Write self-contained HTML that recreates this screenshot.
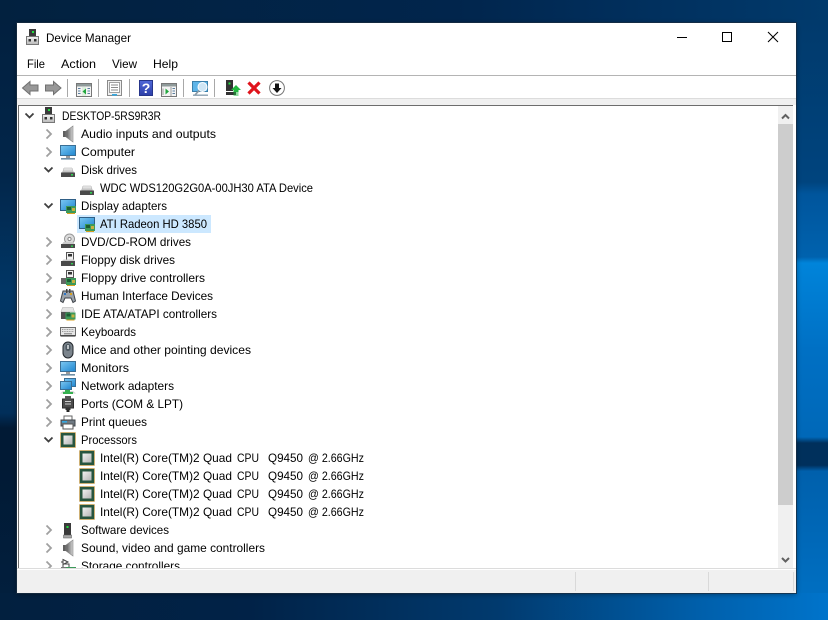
<!DOCTYPE html>
<html><head><meta charset="utf-8"><title>Device Manager</title>
<style>
html,body{margin:0;padding:0;width:828px;height:620px;overflow:hidden;background:#02203f}
svg{display:block}
text{font-family:"Liberation Sans",sans-serif;font-size:12px;fill:#000}
</style></head><body>
<svg xmlns="http://www.w3.org/2000/svg" width="828" height="620" viewBox="0 0 828 620">
<defs>
<linearGradient id="bg" x1="0" y1="0" x2="1" y2="0">
<stop offset="0" stop-color="#02203f"/><stop offset=".3" stop-color="#012247"/><stop offset=".6" stop-color="#013a6e"/><stop offset=".85" stop-color="#0060ac"/><stop offset="1" stop-color="#0074cb"/>
</linearGradient>
<linearGradient id="top" x1="0" y1="0" x2="1" y2="0">
<stop offset="0" stop-color="#02213f"/><stop offset=".55" stop-color="#01254c"/><stop offset=".7" stop-color="#012c58"/><stop offset="1" stop-color="#013a6c"/>
</linearGradient>
<linearGradient id="right" x1="0" y1="0" x2="0" y2="1">
<stop offset="0" stop-color="#013a6c"/><stop offset=".27" stop-color="#00447e"/><stop offset=".29" stop-color="#00559c"/><stop offset=".395" stop-color="#0062ae"/><stop offset=".405" stop-color="#0084da"/><stop offset=".55" stop-color="#0070c4"/><stop offset=".695" stop-color="#0068b8"/><stop offset=".705" stop-color="#00305c"/><stop offset=".742" stop-color="#00305c"/><stop offset=".752" stop-color="#0060ac"/><stop offset="1" stop-color="#0072c6"/>
</linearGradient>
<linearGradient id="left" x1="0" y1="0" x2="0" y2="1">
<stop offset="0" stop-color="#02203f"/><stop offset=".255" stop-color="#02264a"/><stop offset=".45" stop-color="#013665"/><stop offset=".655" stop-color="#012f5a"/><stop offset=".68" stop-color="#011a35"/><stop offset=".745" stop-color="#011a35"/><stop offset="1" stop-color="#02203f"/>
</linearGradient>
<linearGradient id="disk" x1="0" y1="0" x2="0" y2="1"><stop offset="0" stop-color="#f4f4f4"/><stop offset="1" stop-color="#b8b8b8"/></linearGradient>
<linearGradient id="scr" x1="0" y1="0" x2="1" y2="1"><stop offset="0" stop-color="#7cc8f2"/><stop offset="1" stop-color="#1f86d0"/></linearGradient>
<linearGradient id="chip" x1="0" y1="0" x2="1" y2="1"><stop offset="0" stop-color="#f2f2f2"/><stop offset="1" stop-color="#b5b5b5"/></linearGradient>
<linearGradient id="spk" x1="0" y1="0" x2="1" y2="0"><stop offset="0" stop-color="#5a5a5a"/><stop offset="1" stop-color="#d4d4d4"/></linearGradient>
<linearGradient id="help" x1="0" y1="0" x2="0" y2="1"><stop offset="0" stop-color="#5068d8"/><stop offset="1" stop-color="#2c3ea8"/></linearGradient>

<path id="cr" d="M-1.5 -4.5 L3 0 L-1.5 4.5" fill="none" stroke="#a0a0a0" stroke-width="1.8"/>
<path id="ex" d="M-3.5 -2.5 L.5 1.5 L4.5 -2.5" fill="none" stroke="#404040" stroke-width="1.8"/>

<g id="card"><rect x="0" y="0" width="10" height="7" fill="#3d9a5a"/><rect x="1" y="1" width="4" height="3" fill="#1d5c34"/><rect x="6" y="2" width="3" height="3" fill="#c8b040"/><path d="M1 7.5H9" stroke="#d8a020" stroke-width="1"/></g>

<g id="pc"><rect x="4" y="0" width="7" height="8" fill="#3a3a3a"/><rect x="7" y="2" width="2" height="2" fill="#20e040"/><rect x="1.5" y="7.5" width="12" height="8" fill="url(#disk)" stroke="#777"/><rect x="3.5" y="10" width="2.5" height="2.5" fill="#333"/><rect x="9" y="10" width="2.5" height="2.5" fill="#333"/></g>

<g id="audio"><rect x="2" y="5" width="3" height="6" fill="#5f5f5f"/><path d="M5 5 L12 0 V16 L5 11Z" fill="url(#spk)" stroke="#8a8a8a" stroke-width=".6"/></g>

<g id="mon"><rect x=".5" y=".5" width="15" height="10" fill="url(#scr)" stroke="#3a6f96"/><rect x="6" y="11" width="4" height="2" fill="#9a9a9a"/><rect x="1" y="13" width="14" height="1.6" fill="#6f8fa6"/></g>

<g id="disk1"><path d="M2.5 8.5 L4 4 H12 L13.5 8.5Z" fill="url(#disk)" stroke="#aaa" stroke-width=".5"/><rect x="1" y="8.5" width="14" height="4.5" fill="#4a4a4a"/><rect x="11" y="10" width="2" height="1.6" fill="#30d050"/></g>

<g id="disp"><rect x=".5" y=".5" width="15" height="11" fill="url(#scr)" stroke="#2f5f86"/><use href="#card" x="6" y="7"/></g>

<g id="dvd"><circle cx="9.5" cy="5" r="5" fill="#dcdcdc" stroke="#999"/><circle cx="9.5" cy="5" r="1.6" fill="#fff" stroke="#888"/><path d="M2 10 L3.5 8 H13 L14.5 10Z" fill="#ccc"/><rect x="1" y="10" width="14" height="4" fill="#4a4a4a"/><rect x="11" y="11.5" width="2" height="1.4" fill="#30d050"/></g>

<g id="fd"><rect x="6.5" y=".5" width="7" height="8" fill="#f2f2f2" stroke="#555"/><rect x="8" y="2" width="4" height="2.5" fill="#333"/><path d="M2 9 L3.5 7.5 H14 L15 9Z" fill="#ccc"/><rect x="1" y="9" width="14" height="5" fill="#4a4a4a"/><rect x="11" y="11" width="2" height="1.4" fill="#30d050"/></g>

<g id="fdc"><rect x="6.5" y=".5" width="7" height="7" fill="#f2f2f2" stroke="#555"/><rect x="8" y="2" width="4" height="2.5" fill="#333"/><path d="M1 8 H12 V14 H1Z" fill="#666"/><use href="#card" x="6" y="8"/></g>

<g id="hid"><path d="M3 3 H13 L15.5 13 L13 14.5 L11 10 H5 L3 14.5 L.5 13Z" fill="#9aa2aa" stroke="#3f4349"/><rect x="6" y="1" width="1.5" height="4" fill="#444"/><rect x="9" y="1" width="1.5" height="4" fill="#444"/><rect x="4" y="5" width="2" height="2" fill="#2d74c4"/><rect x="10" y="5" width="2" height="2" fill="#d8a020"/></g>

<g id="ide"><path d="M2.5 1.5 H13 L14.5 6 H1Z" fill="#e4e4e4" stroke="#aaa" stroke-width=".5"/><rect x="1" y="6" width="9" height="7" fill="#505050"/><use href="#card" x="5.5" y="6.5"/></g>

<g id="kb"><rect x=".5" y="3.5" width="15" height="8" fill="#e6e6e6" stroke="#6a6a6a"/><path d="M2 5.5H14M2 7.5H14" stroke="#999" stroke-dasharray="1 .7"/><rect x="4" y="9" width="8" height="1.4" fill="#999"/><rect x=".5" y="11" width="15" height="1.6" fill="#4a4a4a"/></g>

<g id="mouse"><rect x="3" y="0" width="10" height="16" rx="5" fill="#7b848c" stroke="#22272c"/><rect x="5.5" y="2" width="5" height="7" rx="2.4" fill="#4d5860"/><rect x="7.2" y="3" width="1.6" height="4" fill="#d8dde0"/></g>

<g id="net"><rect x="4.5" y=".5" width="11" height="8" fill="url(#scr)" stroke="#3a6f96"/><rect x=".5" y="3.5" width="11" height="8" fill="url(#scr)" stroke="#3a6f96"/><path d="M0 15.5 H16 L13 13 H3Z" fill="#d4d4d4"/><path d="M5 12 H10 V14 H13 V16 H3 V14 H5Z" fill="#35b04f"/></g>

<g id="port"><rect x="2.5" y="3" width="11" height="9" fill="#4c4c4c" stroke="#2b2b2b"/><rect x="5" y="0" width="6" height="3.4" fill="#555"/><path d="M5 5.5H11M5 8H11" stroke="#d0d0d0" stroke-width="1"/><rect x="5.5" y="12" width="5" height="2" fill="#333"/><rect x="6.5" y="14" width="3" height="2" fill="#222"/></g>

<g id="prn"><rect x="4" y="1" width="8" height="5" fill="#fff" stroke="#666"/><rect x="1" y="5" width="14" height="6" fill="#6f7a83" stroke="#3f444a"/><rect x="3" y="9" width="10" height="5" fill="#fff" stroke="#555"/><rect x="2" y="6" width="5" height="1.6" fill="#35a8e0"/></g>

<g id="cpu"><rect x=".5" y=".5" width="15" height="15" fill="#c9a050"/><rect x="1" y="1" width="14" height="14" fill="#27553f"/><rect x="3.5" y="3.5" width="9" height="9" fill="url(#chip)"/><rect x=".5" y=".5" width="15" height="15" fill="none" stroke="#b89040" stroke-dasharray="1 1"/></g>

<g id="sw"><rect x="4" y="0" width="7" height="12" fill="#3a3a3a"/><rect x="6.5" y="3" width="2" height="2" fill="#20e040"/><rect x="3.5" y="12" width="8" height="3" fill="#a8a8a8" stroke="#555" stroke-width=".5"/></g>

<g id="stor"><path d="M3 .5 L8 3 L3 5.5Z M1 3H3" fill="#fff" stroke="#444"/><rect x="3" y="5" width="6" height="4" fill="none" stroke="#444"/><rect x="1" y="8" width="9" height="6" fill="#777"/><use href="#card" x="6" y="8"/></g>

<filter id="shadow" x="-5%" y="-5%" width="110%" height="110%"><feDropShadow dx="0" dy="1" stdDeviation="3" flood-color="#000" flood-opacity=".45"/></filter>
</defs>

<!-- wallpaper -->
<rect width="828" height="620" fill="#02203f"/>
<rect x="0" y="0" width="828" height="23" fill="url(#top)"/>
<rect x="0" y="20" width="17" height="600" fill="url(#left)"/>
<rect x="796" y="20" width="32" height="600" fill="url(#right)"/>
<rect x="0" y="593" width="828" height="27" fill="url(#bg)"/>

<!-- window -->
<rect x="17" y="23" width="779" height="570" fill="#fff" filter="url(#shadow)"/>
<rect x="16.5" y="22.5" width="780" height="571" fill="none" stroke="#1a2d42" stroke-opacity=".75"/>

<!-- title bar -->
<use href="#pc" transform="translate(25,29)"/>
<text x="46" y="42" textLength="85" lengthAdjust="spacingAndGlyphs">Device Manager</text>
<rect x="677" y="37" width="10" height="1" fill="#000"/>
<rect x="722.5" y="32.5" width="9" height="9" fill="none" stroke="#000"/>
<path d="M768 32 L778 42 M778 32 L768 42" stroke="#000" stroke-width="1.05" fill="none"/>

<!-- menu -->
<text x="27" y="68" textLength="18" lengthAdjust="spacingAndGlyphs">File</text>
<text x="61" y="68" textLength="35" lengthAdjust="spacingAndGlyphs">Action</text>
<text x="112" y="68" textLength="25" lengthAdjust="spacingAndGlyphs">View</text>
<text x="153" y="68" textLength="25" lengthAdjust="spacingAndGlyphs">Help</text>
<rect x="17" y="75" width="779" height="1" fill="#b4b4b4"/>

<!-- toolbar -->
<path d="M22.5 88 L30 81.5 V85 H38 V91 H30 V94.5Z" fill="#989898" stroke="#707070"/>
<path d="M61 88 L53.5 81.5 V85 H45.5 V91 H53.5 V94.5Z" fill="#989898" stroke="#707070"/>
<g fill="#a8a8a8"><rect x="67" y="79" width="1" height="18"/><rect x="98" y="79" width="1" height="18"/><rect x="129" y="79" width="1" height="18"/><rect x="183" y="79" width="1" height="18"/><rect x="214" y="79" width="1" height="18"/></g>

<g transform="translate(76,83)"><rect x=".5" y=".5" width="15" height="13" fill="#f4f4f4" stroke="#777"/><rect x="1" y="1" width="14" height="2.5" fill="#8f9a9a"/><rect x="6" y="4" width="4" height="9" fill="#dff0df"/><path d="M6.5 8.5 L10 5.5 V11.5Z" fill="#22a63e"/><path d="M2 5.5H4.5M2 8H4.5M2 10.5H4.5M11.5 5.5H14M11.5 8H14M11.5 10.5H14" stroke="#5b7fa0"/></g>
<g transform="translate(107,80)"><rect x=".5" y=".5" width="14" height="15" fill="#f0f0f0" stroke="#8a8a8a"/><rect x="2.5" y="2.5" width="10" height="10" fill="#fff" stroke="#a0a0a0"/><path d="M4 5H11M4 7.5H11M4 10H11" stroke="#8a8a8a"/><rect x="5" y="14" width="5" height="1.6" fill="#35a8e0"/></g>
<rect x="139.5" y="80.5" width="13" height="15" fill="url(#help)" stroke="#26358a"/>
<text x="146" y="93" text-anchor="middle" style="font-size:14px;font-weight:bold;fill:#fff">?</text>
<g transform="translate(161,83)"><rect x=".5" y=".5" width="15" height="13" fill="#f4f4f4" stroke="#777"/><rect x="1" y="1" width="14" height="2.5" fill="#8f9a9a"/><path d="M4.5 5.5 L8 8.5 L4.5 11.5Z" fill="#22a63e"/><path d="M2 5.5V12M10 4V13" stroke="#9a9a9a"/><path d="M11.5 5.5H14M11.5 8H14M11.5 10.5H14" stroke="#5b7fa0"/></g>
<g transform="translate(192,81)"><rect x=".5" y=".5" width="15" height="10" fill="#5db4e8" stroke="#3a7faa"/><rect x="1" y="13.5" width="15" height="1.4" fill="#8aa0b0"/><circle cx="10.5" cy="6" r="4.5" fill="#cfe6f5" stroke="#fff"/><path d="M7.2 9.3 L3 14" stroke="#8a9aa6" stroke-width="1.6"/></g>
<g transform="translate(226,80)"><rect x="0" y="0" width="7" height="11" fill="#333"/><rect x="2.5" y="2.5" width="2" height="2" fill="#20e040"/><rect x="0" y="12" width="10" height="3" fill="#333"/><path d="M10 5 L15 10 H12.5 V12 H7.5 V10 H5Z" fill="#22b840"/><path d="M7.5 13H12.5M7.5 15H12.5" stroke="#22b840"/></g>
<path d="M248.5 82.5 L259.5 93.5 M259.5 82.5 L248.5 93.5" stroke="#e0141c" stroke-width="3.2" fill="none"/>
<circle cx="277" cy="88" r="7.4" fill="#fff" stroke="#777"/>
<path d="M277 93 L272.5 88 H275 V83.5 H279 V88 H281.5Z" fill="#111"/>

<!-- band above tree -->
<rect x="17" y="98" width="779" height="7" fill="#f0f0f0"/>
<rect x="17" y="98" width="779" height="1" fill="#dcdcdc"/>
<rect x="18" y="105" width="776" height="1" fill="#6d6d6d"/>
<rect x="18" y="105" width="1" height="463" fill="#6d6d6d"/>

<!-- tree rows -->
<rect x="77" y="215" width="134" height="18" fill="#cce8ff"/>

<use href="#ex" x="29" y="116"/><use href="#pc" transform="translate(41,107)"/>
<text x="62" y="120" textLength="99" lengthAdjust="spacingAndGlyphs">DESKTOP-5RS9R3R</text>

<use href="#cr" x="48" y="134"/><use href="#audio" transform="translate(61,126)"/>
<text x="81" y="138" textLength="135" lengthAdjust="spacingAndGlyphs">Audio inputs and outputs</text>

<use href="#cr" x="48" y="152"/><use href="#mon" transform="translate(60,145)"/>
<text x="81" y="156" textLength="54" lengthAdjust="spacingAndGlyphs">Computer</text>

<use href="#ex" x="48" y="170"/><use href="#disk1" transform="translate(60,164)"/>
<text x="81" y="174" textLength="56" lengthAdjust="spacingAndGlyphs">Disk drives</text>

<use href="#disk1" transform="translate(79,182)"/>
<text x="100" y="192" textLength="213" lengthAdjust="spacingAndGlyphs">WDC WDS120G2G0A-00JH30 ATA Device</text>

<use href="#ex" x="48" y="206"/><use href="#disp" transform="translate(60,199)"/>
<text x="81" y="210" textLength="86" lengthAdjust="spacingAndGlyphs">Display adapters</text>

<use href="#disp" transform="translate(79,217)"/>
<text x="100" y="228" textLength="107" lengthAdjust="spacingAndGlyphs">ATI Radeon HD 3850</text>

<use href="#cr" x="48" y="242"/><use href="#dvd" transform="translate(60,234)"/>
<text x="81" y="246" textLength="110" lengthAdjust="spacingAndGlyphs">DVD/CD-ROM drives</text>

<use href="#cr" x="48" y="260"/><use href="#fd" transform="translate(60,252)"/>
<text x="81" y="264" textLength="94" lengthAdjust="spacingAndGlyphs">Floppy disk drives</text>

<use href="#cr" x="48" y="278"/><use href="#fdc" transform="translate(60,270)"/>
<text x="81" y="282" textLength="124" lengthAdjust="spacingAndGlyphs">Floppy drive controllers</text>

<use href="#cr" x="48" y="296"/><use href="#hid" transform="translate(60,288)"/>
<text x="81" y="300" textLength="132" lengthAdjust="spacingAndGlyphs">Human Interface Devices</text>

<use href="#cr" x="48" y="314"/><use href="#ide" transform="translate(60,306)"/>
<text x="81" y="318" textLength="136" lengthAdjust="spacingAndGlyphs">IDE ATA/ATAPI controllers</text>

<use href="#cr" x="48" y="332"/><use href="#kb" transform="translate(60,324)"/>
<text x="81" y="336" textLength="55" lengthAdjust="spacingAndGlyphs">Keyboards</text>

<use href="#cr" x="48" y="350"/><use href="#mouse" transform="translate(60,342)"/>
<text x="81" y="354" textLength="170" lengthAdjust="spacingAndGlyphs">Mice and other pointing devices</text>

<use href="#cr" x="48" y="368"/><use href="#mon" transform="translate(60,361)"/>
<text x="81" y="372" textLength="48" lengthAdjust="spacingAndGlyphs">Monitors</text>

<use href="#cr" x="48" y="386"/><use href="#net" transform="translate(60,378)"/>
<text x="81" y="390" textLength="93" lengthAdjust="spacingAndGlyphs">Network adapters</text>

<use href="#cr" x="48" y="404"/><use href="#port" transform="translate(60,396)"/>
<text x="81" y="408" textLength="102" lengthAdjust="spacingAndGlyphs">Ports (COM &amp; LPT)</text>

<use href="#cr" x="48" y="422"/><use href="#prn" transform="translate(60,415)"/>
<text x="81" y="426" textLength="66" lengthAdjust="spacingAndGlyphs">Print queues</text>

<use href="#ex" x="48" y="440"/><use href="#cpu" transform="translate(60,432)"/>
<text x="81" y="444" textLength="56" lengthAdjust="spacingAndGlyphs">Processors</text>

<use href="#cpu" transform="translate(79,450)"/>
<text x="100" y="462" textLength="132" lengthAdjust="spacingAndGlyphs">Intel(R) Core(TM)2 Quad</text><text x="237" y="462" textLength="22" lengthAdjust="spacingAndGlyphs">CPU</text><text x="268" y="462" textLength="35" lengthAdjust="spacingAndGlyphs">Q9450</text><text x="308" y="462" textLength="56" lengthAdjust="spacingAndGlyphs">@ 2.66GHz</text>
<use href="#cpu" transform="translate(79,468)"/>
<text x="100" y="480" textLength="132" lengthAdjust="spacingAndGlyphs">Intel(R) Core(TM)2 Quad</text><text x="237" y="480" textLength="22" lengthAdjust="spacingAndGlyphs">CPU</text><text x="268" y="480" textLength="35" lengthAdjust="spacingAndGlyphs">Q9450</text><text x="308" y="480" textLength="56" lengthAdjust="spacingAndGlyphs">@ 2.66GHz</text>
<use href="#cpu" transform="translate(79,486)"/>
<text x="100" y="498" textLength="132" lengthAdjust="spacingAndGlyphs">Intel(R) Core(TM)2 Quad</text><text x="237" y="498" textLength="22" lengthAdjust="spacingAndGlyphs">CPU</text><text x="268" y="498" textLength="35" lengthAdjust="spacingAndGlyphs">Q9450</text><text x="308" y="498" textLength="56" lengthAdjust="spacingAndGlyphs">@ 2.66GHz</text>
<use href="#cpu" transform="translate(79,504)"/>
<text x="100" y="516" textLength="132" lengthAdjust="spacingAndGlyphs">Intel(R) Core(TM)2 Quad</text><text x="237" y="516" textLength="22" lengthAdjust="spacingAndGlyphs">CPU</text><text x="268" y="516" textLength="35" lengthAdjust="spacingAndGlyphs">Q9450</text><text x="308" y="516" textLength="56" lengthAdjust="spacingAndGlyphs">@ 2.66GHz</text>

<use href="#cr" x="48" y="530"/><use href="#sw" transform="translate(60,523)"/>
<text x="81" y="534" textLength="88" lengthAdjust="spacingAndGlyphs">Software devices</text>

<use href="#cr" x="48" y="548"/><use href="#audio" transform="translate(61,540)"/>
<text x="81" y="552" textLength="184" lengthAdjust="spacingAndGlyphs">Sound, video and game controllers</text>

<use href="#cr" x="48" y="566"/><use href="#stor" transform="translate(60,559)"/>
<text x="81" y="570" textLength="99" lengthAdjust="spacingAndGlyphs">Storage controllers</text>

<!-- scrollbar -->
<rect x="778" y="106" width="15" height="462" fill="#f0f0f0"/>
<rect x="778" y="124" width="15" height="381" fill="#cdcdcd"/>
<path d="M782 118.5 L785.5 115 L789 118.5" fill="none" stroke="#606060" stroke-width="2"/>
<path d="M782 558 L785.5 561.5 L789 558" fill="none" stroke="#606060" stroke-width="2"/>
<rect x="793" y="105" width="3" height="466" fill="#fff"/>

<!-- status bar -->
<rect x="17" y="568" width="779" height="25" fill="#f0f0f0"/>
<rect x="17" y="568" width="779" height="1" fill="#dcdcdc"/>
<rect x="17" y="569" width="779" height="1" fill="#fff"/>
<g fill="#d9d9d9"><rect x="575" y="572" width="1" height="19"/><rect x="708" y="572" width="1" height="19"/><rect x="793" y="572" width="1" height="19"/></g>
</svg>
</body></html>
